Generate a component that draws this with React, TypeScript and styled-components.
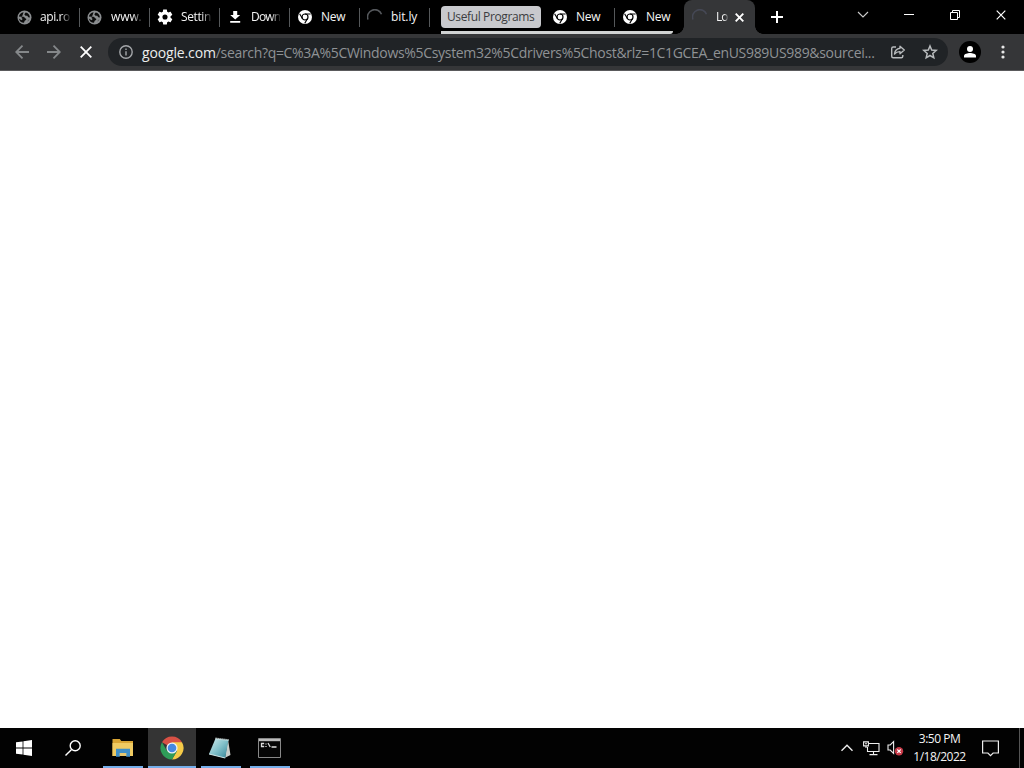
import React from 'react';
import styled, { createGlobalStyle } from 'styled-components';

const Global = createGlobalStyle`
  * { box-sizing: border-box; }
  html, body { margin: 0; padding: 0; background: #fff; }
  body { font-family: "Open Sans", "Noto Sans", sans-serif; overflow: hidden; }
  svg { display: block; flex: none; }
`;

const Screen = styled.div`
  width: 1024px;
  height: 768px;
  display: flex;
  flex-direction: column;
  background: #fff;
`;

const TabStrip = styled.header`
  height: 34px;
  flex: none;
  display: flex;
  background: #000;
  padding-left: 10px;
`;

const Tab = styled.div<{ $divider?: boolean }>`
  width: 70px;
  height: 34px;
  flex: none;
  display: flex;
  align-items: center;
  padding-left: 7px;
  background: linear-gradient(#55585a, #55585a) right 0 top 8px / ${p => (p.$divider ? '1px' : '0')} 19px no-repeat;
`;

const TabIcon = styled.span`
  width: 16px;
  flex: none;
  display: flex;
`;

const TabTitle = styled.span<{ $fade?: boolean; $spacing?: number; $gap?: number }>`
  margin-left: ${p => p.$gap ?? 8}px;
  flex: none;
  white-space: nowrap;
  color: #f4f4f4;
  font-size: 12px;
  line-height: 18px;
  letter-spacing: ${p => p.$spacing ?? -0.1}px;
  ${p => p.$fade && 'mask-image: linear-gradient(to right, #000 68%, rgba(0, 0, 0, 0.15) 100%);'}
`;

const ActiveTab = styled(Tab)`
  width: 71px;
  padding-left: 8px;
  background: #353638;
  border-radius: 8px 8px 0 0;
  position: relative;
  &::before, &::after {
    content: '';
    position: absolute;
    bottom: 0;
    width: 8px;
    height: 8px;
  }
  &::before { left: -8px; background: radial-gradient(circle at 0 0, transparent 7.5px, #353638 8px); }
  &::after { right: -8px; background: radial-gradient(circle at 100% 0, transparent 7.5px, #353638 8px); }
`;

const TabClose = styled.span`
  margin-left: auto;
  margin-right: 11px;
`;

const TabGroup = styled.div`
  width: 232px;
  height: 34px;
  margin: 0 11px;
  flex: none;
  display: flex;
  border-bottom: 3px solid #d0d2d2;
  border-bottom-right-radius: 3px;
`;

const GroupChip = styled.div`
  width: 100px;
  height: 22px;
  margin: 6px 4px 0 0;
  flex: none;
  border-radius: 4px;
  background: #c8c9cd;
  color: #3c3d41;
  font-size: 12px;
  line-height: 21px;
  letter-spacing: -0.38px;
  padding-left: 6px;
  white-space: nowrap;
`;

const NewTab = styled.div`
  width: 44px;
  display: flex;
  align-items: center;
  justify-content: center;
`;

const WindowControls = styled.div`
  margin-left: auto;
  width: 184px;
  height: 29px;
  display: flex;
`;

const WindowButton = styled.div`
  width: 46px;
  display: flex;
  align-items: center;
  justify-content: center;
`;

const Toolbar = styled.nav`
  height: 37px;
  flex: none;
  display: flex;
  align-items: center;
  padding: 0 0 1px 6px;
  background: #353638;
  border-bottom: 1px solid #5a5a5c;
`;

const NavButton = styled.div`
  width: 32px;
  height: 32px;
  display: flex;
  align-items: center;
  justify-content: center;
`;

const AddressBar = styled.div`
  width: 840px;
  height: 28px;
  margin-left: 6px;
  border-radius: 14px;
  background: #202326;
  display: flex;
  align-items: center;
  padding-left: 11px;
`;

const Url = styled.div`
  width: 740px;
  margin-left: 9px;
  padding-top: 2px;
  font-size: 14px;
  line-height: 20px;
  white-space: nowrap;
  color: #8f9295;
  letter-spacing: -0.32px;
`;

const Host = styled.span`
  color: #eceded;
  letter-spacing: -0.15px;
`;

const AddressAction = styled.div`
  width: 32px;
  display: flex;
  justify-content: center;
`;

const Avatar = styled.div`
  width: 22px;
  height: 22px;
  margin-left: 11px;
  border-radius: 50%;
  background: #000;
  display: flex;
  align-items: center;
  justify-content: center;
`;

const MenuButton = styled.div`
  margin-left: 19.5px;
`;

const Page = styled.main`
  flex: 1;
  background: #fff;
`;

const Taskbar = styled.footer`
  height: 40px;
  flex: none;
  display: flex;
  background: #020202;
`;

const TaskButton = styled.div<{ $width?: number; $active?: boolean; $line?: number }>`
  width: ${p => p.$width ?? 49}px;
  height: 40px;
  flex: none;
  display: flex;
  align-items: center;
  justify-content: center;
  background: linear-gradient(#75aeea, #75aeea) center bottom / ${p => p.$line ?? 0}px 2px no-repeat,
    ${p => (p.$active ? '#343434' : 'transparent')};
`;

const Tray = styled.div`
  margin-left: auto;
  display: flex;
  align-items: center;
`;

const TrayIcon = styled.div<{ $width: number }>`
  width: ${p => p.$width}px;
  display: flex;
  justify-content: center;
`;

const Clock = styled.div`
  width: 65px;
  text-align: center;
  color: #f4f4f4;
  font-size: 12px;
  line-height: 18px;
  letter-spacing: -0.5px;
  white-space: nowrap;
`;

const ShowDesktop = styled.div`
  width: 5px;
  height: 40px;
  margin-left: 10px;
  border-left: 1px solid #555;
`;

const GlobeIcon = () => (
  <svg width="15" height="15" viewBox="0 0 15 15">
    <circle cx="7.5" cy="7.5" r="7" fill="#8b8e90" />
    <path d="M6.6 2.2C4 2.5 2.3 4.4 1.9 6.6l4.3.2c1.6 0 1.2 1.4 2.4 1.6 1 .2.9 1.5-.1 1.8-.9.2-1 1.1-1.5 2.6-2.7 0-4.7-1.8-5.1-4.4l2.6 1.9 1.2-1.2-1.2-1.2" fill="#0b0b0b" />
    <path d="M8.7 2.4 7.3 4.3l1.2 1.5 1.8-.1.9 1.5 1.7.2C12.9 4.8 11.2 2.8 8.7 2.4ZM10 11.6l2.3-2.3c-.4 1-.9 1.7-2.3 2.3Z" fill="#0b0b0b" />
  </svg>
);

const GearIcon = () => (
  <svg width="16" height="16" viewBox="1.7 1.7 20.6 20.6" fill="#fff">
    <path d="M19.14 12.94c.04-.3.06-.61.06-.94s-.02-.64-.07-.94l2.03-1.58c.18-.14.23-.41.12-.61l-1.92-3.32c-.12-.22-.37-.29-.59-.22l-2.39.96c-.5-.38-1.03-.7-1.62-.94l-.36-2.54c-.04-.24-.24-.41-.48-.41h-3.84c-.24 0-.43.17-.47.41l-.36 2.54c-.59.24-1.13.57-1.62.94l-2.39-.96c-.22-.08-.47 0-.59.22L2.74 8.87c-.12.21-.08.47.12.61l2.03 1.58c-.05.3-.09.63-.09.94s.02.64.07.94l-2.03 1.58c-.18.14-.23.41-.12.61l1.92 3.32c.12.22.37.29.59.22l2.39-.96c.5.38 1.03.7 1.62.94l.36 2.54c.05.24.24.41.48.41h3.84c.24 0 .44-.17.47-.41l.36-2.54c.59-.24 1.13-.56 1.62-.94l2.39.96c.22.08.47 0 .59-.22l1.92-3.32c.12-.22.07-.47-.12-.61l-2.01-1.58zM12 15.3a3.3 3.3 0 1 1 0-6.6 3.3 3.3 0 0 1 0 6.6z" />
  </svg>
);

const DownloadIcon = () => (
  <svg width="16" height="14" viewBox="0 0 16 14" fill="#fff">
    <path d="M6.2 1h4v4h3L8.2 9.6 3.2 5h3ZM3.2 11h10v1.8h-10Z" />
  </svg>
);

const ChromeMono = () => (
  <svg width="16" height="16" viewBox="0 0 16 16">
    <circle cx="8" cy="8" r="7" fill="#fff" />
    <circle cx="8" cy="8" r="3" fill="none" stroke="#000" strokeWidth="1.2" />
    <path d="M8 5h5.6M5.4 9.5 2.6 4.7M10.6 9.5l-2.9 4.9" stroke="#000" strokeWidth="1.1" />
  </svg>
);

const Spinner = ({ color }: { color: string }) => (
  <svg width="16" height="16" viewBox="0 0 16 16" fill="none" stroke={color} strokeWidth="1.6">
    <path d="M1 10.5A7 7 0 0 1 14.5 5.3" />
  </svg>
);

const Cross = ({ size, width, color = '#fff' }: { size: number; width: number; color?: string }) => (
  <svg width={size} height={size} viewBox={`0 0 ${size} ${size}`} stroke={color} strokeWidth={width}>
    <path d={`M.7.7 ${size - 0.7} ${size - 0.7}M${size - 0.7}.7.7 ${size - 0.7}`} />
  </svg>
);

const Arrow = ({ flip }: { flip?: boolean }) => (
  <svg width="14" height="14" viewBox="0 0 14 14" fill="none" stroke="#85888a" strokeWidth="1.8">
    <path d={flip ? 'M0 7h13M6.5.7 12.8 7l-6.3 6.3' : 'M14 7H1M7.5.7 1.2 7l6.3 6.3'} />
  </svg>
);

const InfoIcon = () => (
  <svg width="14" height="14" viewBox="0 0 14 14" fill="none" stroke="#a4a7aa" strokeWidth="1.4">
    <circle cx="7" cy="7" r="6.2" />
    <path d="M7 6.2v4.3M7 3.4v1.5" />
  </svg>
);

const ShareIcon = () => (
  <svg width="16" height="16" viewBox="0 0 16 16" fill="none" stroke="#b8bbbd" strokeWidth="1.4" strokeLinejoin="round">
    <path d="M6 3H3.2Q1.7 3 1.7 4.5v7.8q0 1.5 1.5 1.5h8.1q1.5 0 1.5-1.5V11" />
    <path d="M10 2.2 14.3 6 10 9.7V7.6c-2.6-.1-4.1.8-5.5 2.5.4-3.3 2.2-5.4 5.5-5.8Z" />
  </svg>
);

const StarIcon = () => (
  <svg width="16" height="16" viewBox="0 0 16 16" fill="none" stroke="#b8bbbd" strokeWidth="1.5">
    <path d="m8 2 1.7 4 4.5.4-3.4 3 1 4.4L8 11.5l-3.8 2.3 1-4.4-3.4-3L6.3 6Z" />
  </svg>
);

const PersonIcon = () => (
  <svg width="14" height="14" viewBox="0 0 14 14" fill="#fff">
    <circle cx="7" cy="4" r="3" />
    <path d="M1 12.5v-1.8C1.3 8.9 4.5 8 7 8s5.7.9 6 2.7v1.8Z" />
  </svg>
);

const DotsIcon = () => (
  <svg width="4" height="14" viewBox="0 0 4 14" fill="#e8e8e8">
    <circle cx="2" cy="2" r="1.6" />
    <circle cx="2" cy="7" r="1.6" />
    <circle cx="2" cy="12" r="1.6" />
  </svg>
);

const WindowsLogo = () => (
  <svg width="16" height="16" viewBox="0 0 16 16" fill="#fff">
    <path d="M0 2.3 6.6 1.4v6.2H0ZM7.4 1.3 16 0v7.6H7.4ZM0 8.4h6.6v6.2L0 13.7ZM7.4 8.4H16V16l-8.6-1.3Z" />
  </svg>
);

const SearchIcon = () => (
  <svg width="16" height="16" viewBox="0 0 16 16" fill="none" stroke="#fff" strokeWidth="1.4">
    <circle cx="10.2" cy="5.8" r="5" />
    <path d="M6.6 9.4.5 15.5" />
  </svg>
);

const FolderIcon = () => (
  <svg width="22" height="18" viewBox="0 0 22 18">
    <path d="M.5 0h7.3l1.5 2H21v15H.5Z" fill="#d9a534" />
    <path d="M.5 4H21v13H.5Z" fill="#f0cb62" />
    <path d="M4 17.8V9.8h14v8h-3.8V14H7.8v3.8Z" fill="#3f8fc8" />
    <path d="M7.8 14h6.4v3H7.8Z" fill="#e5c670" />
  </svg>
);

const ChromeIcon = () => (
  <svg width="24" height="24" viewBox="-.5 -.5 25 25">
    <path d="M12 12 1.6 6A12 12 0 0 1 22.4 6Z" fill="#d85145" />
    <path d="M12 6h10.4A12 12 0 0 1 12 24l5.2-9Z" fill="#f5ca48" />
    <path d="M1.6 6A12 12 0 0 0 12 24l5.2-9H6.8Z" fill="#2f9c58" />
    <circle cx="12" cy="12" r="5.8" fill="#f0f2f5" />
    <circle cx="12" cy="12" r="4.5" fill="#4688e2" />
  </svg>
);

const NotepadIcon = () => (
  <svg width="25" height="22" viewBox="0 0 25 22">
    <defs>
      <linearGradient id="sheet" x1="0" y1="0" x2="1" y2="1">
        <stop offset="0" stopColor="#d5edef" />
        <stop offset=".5" stopColor="#83c1ca" />
        <stop offset="1" stopColor="#338497" />
      </linearGradient>
    </defs>
    <path d="m20 2.5 2.5 15.5-5.5 2.7Z" fill="#c8cdc9" />
    <path d="M7.5 1.5 20.5 3 17.2 21 1 17Z" fill="url(#sheet)" />
    <path d="M7.5 1.5 20.5 3" stroke="#dce8e8" strokeWidth="1.8" strokeDasharray="1.2 .8" />
    <path d="m1 17 16.2 4" stroke="#d2e8e9" />
  </svg>
);

const ConsoleIcon = () => (
  <svg width="23" height="20" viewBox="0 0 23 20">
    <path d="M.5.5h22v19H.5Z" fill="#050505" stroke="#888" />
    <path d="M1 1h21v2.2H1Z" fill="#bcbcbc" />
    <path d="M6.2 5.5H3.5v3h2.7M8 5.5v1M8 8v1M10 5l2.2 4M13.5 9h5" stroke="#ddd" strokeWidth="1.3" fill="none" />
  </svg>
);

const ChevronUp = () => (
  <svg width="12" height="8" viewBox="0 0 12 8" fill="none" stroke="#eee" strokeWidth="1.4">
    <path d="m.5 6.8 5.5-5.5 5.5 5.5" />
  </svg>
);

const NetworkIcon = () => (
  <svg width="17" height="15" viewBox="0 0 17 15" fill="none" stroke="#eee" strokeWidth="1.1">
    <path d="M6 2.5h10v8H4.5V6M10.5 10.5v3M6.5 13.6h8" />
    <path d="M.6.9h4.8v4H.6ZM2 2.7h2M3 5v2" />
  </svg>
);

const SpeakerIcon = () => (
  <svg width="17" height="16" viewBox="0 0 17 16">
    <path d="M1 5h2.2L6.6 1.5v12L3.2 10H1Z" fill="none" stroke="#eee" strokeWidth="1.1" />
    <circle cx="12" cy="11.2" r="4.2" fill="#c63a48" />
    <path d="m10.3 9.5 3.4 3.4m0-3.4-3.4 3.4" stroke="#fff" strokeWidth="1.1" />
  </svg>
);

const NotificationIcon = () => (
  <svg width="17" height="17" viewBox="0 0 17 17" fill="none" stroke="#eee" strokeWidth="1.2">
    <path d="M.6 1h15.8v12h-5.3l-2.6 2.7L5.9 13H.6Z" />
  </svg>
);

export default function App() {
  return (
    <Screen>
      <Global />
      <TabStrip>
        <Tab $divider><TabIcon><GlobeIcon /></TabIcon><TabTitle $gap={7} $fade $spacing={-0.4}>api.ro</TabTitle></Tab>
        <Tab $divider><TabIcon><GlobeIcon /></TabIcon><TabTitle $fade>www.</TabTitle></Tab>
        <Tab $divider><TabIcon><GearIcon /></TabIcon><TabTitle $fade $spacing={-0.4}>Settin</TabTitle></Tab>
        <Tab $divider><TabIcon><DownloadIcon /></TabIcon><TabTitle $fade $spacing={-0.8}>Down</TabTitle></Tab>
        <Tab $divider><TabIcon><ChromeMono /></TabIcon><TabTitle $spacing={-0.3}>New</TabTitle></Tab>
        <Tab $divider><TabIcon><Spinner color="#55585c" /></TabIcon><TabTitle>bit.ly</TabTitle></Tab>
        <TabGroup>
          <GroupChip>Useful Programs</GroupChip>
          <Tab $divider><TabIcon><ChromeMono /></TabIcon><TabTitle $spacing={-0.3}>New</TabTitle></Tab>
          <Tab><TabIcon><ChromeMono /></TabIcon><TabTitle $spacing={-0.3}>New</TabTitle></Tab>
        </TabGroup>
        <ActiveTab>
          <TabIcon><Spinner color="#454855" /></TabIcon>
          <TabTitle $fade $spacing={-0.9}>Lo</TabTitle>
          <TabClose><Cross size={9} width={1.9} /></TabClose>
        </ActiveTab>
        <NewTab>
          <svg width="12" height="12" viewBox="0 0 12 12" stroke="#fff" strokeWidth="2"><path d="M6 0v12M0 6h12" /></svg>
        </NewTab>
        <WindowControls>
          <WindowButton>
            <svg width="12" height="8" viewBox="0 0 12 8" fill="none" stroke="#ccc" strokeWidth="1.1"><path d="m1 1 5 5 5-5" /></svg>
          </WindowButton>
          <WindowButton>
            <svg width="10" height="1" viewBox="0 0 10 1"><path d="M0 0h10v1H0Z" fill="#fff" /></svg>
          </WindowButton>
          <WindowButton>
            <svg width="10" height="10" viewBox="0 0 10 10" fill="none" stroke="#fff"><path d="M.5 2.5h7v7h-7ZM2.5 2.5v-2h7v7h-2" /></svg>
          </WindowButton>
          <WindowButton><Cross size={10} width={1.2} /></WindowButton>
        </WindowControls>
      </TabStrip>
      <Toolbar>
        <NavButton><Arrow /></NavButton>
        <NavButton><Arrow flip /></NavButton>
        <NavButton><Cross size={12} width={1.8} /></NavButton>
        <AddressBar>
          <InfoIcon />
          <Url><Host>google.com</Host>/search?q=C%3A%5CWindows%5Csystem32%5Cdrivers%5Chost&amp;rlz=1C1GCEA_enUS989US989&amp;sourcei...</Url>
          <AddressAction><ShareIcon /></AddressAction>
          <AddressAction><StarIcon /></AddressAction>
        </AddressBar>
        <Avatar><PersonIcon /></Avatar>
        <MenuButton><DotsIcon /></MenuButton>
      </Toolbar>
      <Page />
      <Taskbar>
        <TaskButton $width={48}><WindowsLogo /></TaskButton>
        <TaskButton $width={50}><SearchIcon /></TaskButton>
        <TaskButton $width={50} $line={40}><FolderIcon /></TaskButton>
        <TaskButton $width={48} $active $line={48}><ChromeIcon /></TaskButton>
        <TaskButton $line={40}><NotepadIcon /></TaskButton>
        <TaskButton $line={40}><ConsoleIcon /></TaskButton>
        <Tray>
          <TrayIcon $width={24}><ChevronUp /></TrayIcon>
          <TrayIcon $width={24}><NetworkIcon /></TrayIcon>
          <TrayIcon $width={24}><SpeakerIcon /></TrayIcon>
          <Clock>3:50 PM<br />1/18/2022</Clock>
          <TrayIcon $width={37}><NotificationIcon /></TrayIcon>
          <ShowDesktop />
        </Tray>
      </Taskbar>
    </Screen>
  );
}
